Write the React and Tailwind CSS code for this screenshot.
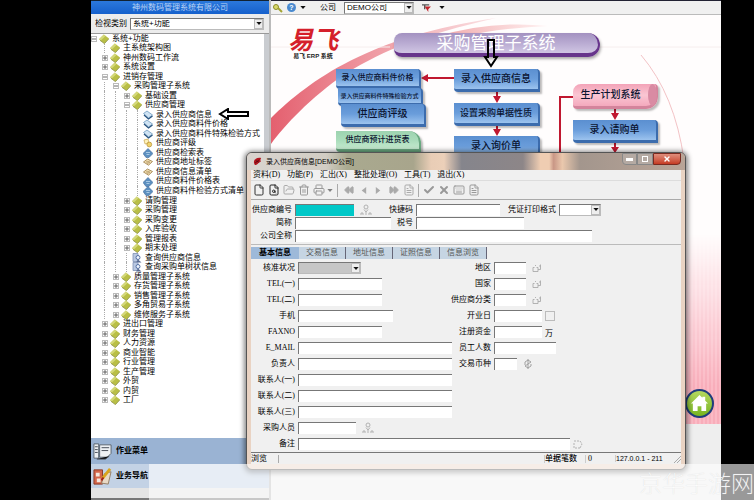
import React from "react";
import {
  File, FileSearch, FolderOpen, Trash2, Printer, Rewind, FastForward,
  FileText, Check, X, Keyboard,
} from "lucide-react";

const tree = [
  [0, "系统+功能", "book", "-"],
  [1, "主系统架构图", "book", ""],
  [1, "神州数码工作流", "book", "+"],
  [1, "系统设置", "book", "+"],
  [1, "进销存管理", "book", "-"],
  [2, "采购管理子系统", "book", "-"],
  [3, "基础设置", "book", "+"],
  [3, "供应商管理", "book", "-"],
  [4, "录入供应商信息", "form", ""],
  [4, "录入供应商料件价格", "form", ""],
  [4, "录入供应商料件特殊检验方式", "form", ""],
  [4, "供应商评级", "batch", ""],
  [4, "供应商检索表", "query", ""],
  [4, "供应商地址标签", "report", ""],
  [4, "供应商信息清单", "report", ""],
  [4, "供应商料件价格表", "query", ""],
  [4, "供应商料件检验方式清单", "query", ""],
  [3, "请购管理", "book", "+"],
  [3, "采购管理", "book", "+"],
  [3, "采购变更", "book", "+"],
  [3, "入库验收", "book", "+"],
  [3, "管理报表", "book", "+"],
  [3, "期末处理", "book", "+"],
  [3, "查询供应商信息", "find", ""],
  [3, "查询采购单树状信息", "find", ""],
  [2, "质量管理子系统", "book", "+"],
  [2, "存货管理子系统", "book", "+"],
  [2, "销售管理子系统", "book", "+"],
  [2, "多角贸易子系统", "book", "+"],
  [2, "维修服务子系统", "book", "+"],
  [1, "进出口管理", "book", "+"],
  [1, "财务管理", "book", "+"],
  [1, "人力资源", "book", "+"],
  [1, "商业智能", "book", "+"],
  [1, "行业管理", "book", "+"],
  [1, "生产管理", "book", "+"],
  [1, "外贸", "book", "+"],
  [1, "内贸", "book", "+"],
  [1, "工厂", "book", "+"],
];

function TreeIcon({ kind }) {
  if (kind === "form")
    return (
      <svg viewBox="0 0 10 10" className="size-[10px]">
        <path d="M0.5 3.500 4 1 9.500 5 5.500 8Z" fill="#cfe3f3" stroke="#6f9cc0" strokeWidth="0.8" />
        <path d="M1 5 5.500 9 9.500 6" fill="none" stroke="#2a5580" strokeWidth="1.3" />
      </svg>
    );
  if (kind === "batch")
    return (
      <svg viewBox="0 0 10 10" className="size-[10px]">
        <path d="M1 2 5 1 6 5 2 6Z" fill="#fff3ba" stroke="#c9a550" strokeWidth="0.7" />
        <circle cx="6.3" cy="6.5" r="2.4" fill="#f0d36c" stroke="#b48a2e" strokeWidth="0.7" />
      </svg>
    );
  if (kind === "query")
    return (
      <svg viewBox="0 0 10 10" className="size-[10px]">
        <path d="M0 5.500 5 0.500 10 5.500 6 9.500 3 9.500Z" fill="#5c8fbf" stroke="#3f6a9a" strokeWidth="0.6" />
        <path d="M3 4.500h4M3.500 6.500h3" stroke="#b9d5ee" strokeWidth="0.8" />
      </svg>
    );
  if (kind === "report")
    return (
      <svg viewBox="0 0 10 10" className="size-[10px]">
        <path d="M0.5 5 4.5 2 9.5 4.5 5.5 8.2Z" fill="#efdcb0" stroke="#9a7b45" strokeWidth="0.8" />
        <path d="M3 5 6.5 4.5M4 6.3 7 5.5" stroke="#9a7b45" strokeWidth="0.6" />
      </svg>
    );
  if (kind === "find")
    return (
      <svg viewBox="0 0 10 10" className="size-[10px]">
        <path d="M1 0.500h5v8H1z" fill="#b9c8e2" stroke="#7f90b5" strokeWidth="0.8" />
        <circle cx="6" cy="4.5" r="2" fill="#eef4ff" stroke="#4a669c" strokeWidth="0.9" />
        <path d="M4 9.500 6 6.500 9.500 9.500Z" fill="#5a6c92" />
      </svg>
    );
  return (
    <svg viewBox="0 0 10 10" className="size-[10px]">
      <path d="M0 5.2 4.8 0.6 10 4.4 5.4 9.4Z" fill="#b9bf45" />
      <path d="M0 5.2 4.8 0.6 6.5 1.9 1.8 6.5Z" fill="#d4d87a" />
      <path d="M1 6.3 5.4 9.6 10 4.6" fill="none" stroke="#868c38" strokeWidth="0.8" />
    </svg>
  );
}

function TreeRow({ row }) {
  const [depth, label, kind, state] = row;
  return (
    <li className="flex min-h-0 flex-1 items-center">
      {Array.from({ length: depth + 1 }, (_, i) => (
        <span key={i} className="flex h-full w-[11px] shrink-0 items-center justify-center">
          {i === depth && state ? (
            <button className="flex size-[6px] items-center justify-center border border-[#bbb] bg-white" aria-label={"展开 " + label}>
              <svg viewBox="0 0 4 4" className="size-[4px]">
                <path d={state === "+" ? "M0 2h4M2 0v4" : "M0 2h4"} stroke="#444" strokeWidth="0.8" />
              </svg>
            </button>
          ) : (
            i > 0 && <span className="h-full border-l border-dotted border-[#aaa]" />
          )}
        </span>
      ))}
      <TreeIcon kind={kind} />
      <span className="ml-[3px] whitespace-nowrap text-[8px] leading-none">{label}</span>
    </li>
  );
}

function Caret() {
  return (
    <svg viewBox="0 0 7 4" className="h-[3px] w-[6px]">
      <path d="M0 0h7L3.5 4Z" fill="#111" />
    </svg>
  );
}

function Select({ id, label, value, width, tone = "bg-white" }) {
  return (
    <span className={"relative block h-[12px] " + width}>
      <select id={id} aria-label={label} defaultValue={value} className={"block h-full w-full appearance-none border border-[#bbb] border-t-[#777] border-l-[#777] pl-[2px] text-[8px] leading-none " + tone}>
        <option>{value}</option>
      </select>
      <span className="pointer-events-none absolute inset-y-px right-px flex w-[9px] items-center justify-center border border-[#bbb] bg-[#eee]">
        <Caret />
      </span>
    </span>
  );
}

function Field({ id, label, width, labelWidth, tone = "bg-white", children }) {
  return (
    <div className="flex h-4 items-center gap-[3px]">
      <label htmlFor={id} className={"shrink-0 whitespace-nowrap text-right " + labelWidth}>{label}</label>
      {width ? <input id={id} className={"h-[12px] shrink-0 border-t border-l border-[#777] px-[2px] outline-none " + width + " " + tone} /> : null}
      {children}
    </div>
  );
}

function Lookup() {
  return (
    <svg viewBox="0 0 10 10" className="ml-[3px] size-[10px]" fill="none" stroke="#aaa" strokeWidth="0.9">
      <path d="M1 4.500v4h5v-4M1 4.500h1.500M4.500 4.500H6M3 3l1-1M6 6.500h2.500v-5M7 3h1.500" />
    </svg>
  );
}

function People() {
  return (
    <svg viewBox="0 0 12 12" className="ml-[3px] size-[12px] shrink-0" fill="none" stroke="#aaa" strokeWidth="0.9">
      <circle cx="6" cy="3" r="2" />
      <path d="M4 5.500 6 8l2-2.500M6 8v3M1 11V9h2v2M9 11V9h2v2" />
    </svg>
  );
}

function Node({ place, text, children, tone = "from-[#5b8fd0] via-[#6a9ddb] to-[#9cc3ee] border-[#3c6cad]" }) {
  return (
    <button className={"absolute flex items-center justify-center whitespace-nowrap rounded-tr-sm rounded-bl-sm border-b-[3px] border-r-2 bg-linear-to-b font-medium leading-none text-[#0b1430] shadow-[2px_2px_2px_#0004] " + place + " " + text + " " + tone}>
      {children}
    </button>
  );
}

const menus = ["资料(D)", "功能(P)", "汇出(X)", "整批处理(O)", "工具(T)", "退出(X)"];
const tabs = ["基本信息", "交易信息", "地址信息", "证照信息", "信息浏览"];
const tools = [
  [File, "新增", "text-[#333]"], [FileSearch, "查询", "text-[#222]"], [FolderOpen, "打开", "text-[#aaa]"],
  [Trash2, "删除", "text-[#999]"], [Printer, "打印", "text-[#999]"],
];
const moves = [
  [Rewind, "首笔"], ["M8 1 3 5l5 4Z", "上笔"], ["M2 1 7 5 2 9Z", "下笔"], [FastForward, "末笔"], [FileText, "附件"],
];
const actions = [[Check, "确定"], [X, "取消"], [Keyboard, "输入"], [FileText, "说明"]];

function ToolButton({ icon, label, tone }) {
  const Icon = icon;
  const filled = icon === Rewind || icon === FastForward;
  const heavy = icon === Check || icon === X;
  return (
    <button aria-label={label} className={"flex w-[15px] items-center justify-center " + tone}>
      {typeof icon === "string" ? (
        <svg viewBox="0 0 10 10" className="size-[9px]"><path d={icon} fill="currentColor" /></svg>
      ) : (
        <Icon size={filled ? 10 : 12} strokeWidth={heavy ? 4 : 2} fill={filled ? "currentColor" : "none"} />
      )}
    </button>
  );
}

function SupplierWindow() {
  const column = "w-[44px]";
  return (
    <section className="absolute top-[152px] left-[246px] w-[440px] rounded-[6px] border border-[#555] bg-[#e9d3c3] px-[4px] pb-[5px] text-[8px] leading-none text-black shadow-[0_1px_5px_2px_#0007] [font-family:'Liberation_Serif','Noto_Sans_CJK_SC',serif]">
      <header className="-mx-[4px] flex h-[17px] items-center rounded-t-[5px] bg-[linear-gradient(90deg,#d9d4cf_0%,#d2cdc4_18%,#a9a98f_23%,#a8a58c_38%,#e9cdb6_42%,#ecd0b9_45%,#85858c_49%,#8d8688_63%,#efcdb2_67%,#efcdb2_69%,#c99786_70%,#eac8ad_72%,#a3968d_76%,#b9a497_100%)] pl-[6px] pr-[4px] [font-family:'Liberation_Sans','Noto_Sans_CJK_SC',sans-serif]">
        <svg viewBox="0 0 10 10" className="size-[9px]">
          <path d="M1 6C1 2 5 0 9 1 8 3 8 4 9 5 6 5 6 9 2 9Z" fill="#b3151f" />
          <path d="M2 7 7 3M3 4 7 6" stroke="#5c070d" strokeWidth="0.9" />
        </svg>
        <h1 className="ml-[4px] text-[7px]">录入供应商信息[DEMO公司]</h1>
        <div className="mb-[5px] ml-auto flex h-[12px] text-white">
          <button aria-label="最小化" className="flex w-[15px] items-center justify-center rounded-bl-sm border border-[#888] bg-[#b5aaa3]"><span className="h-[3px] w-[7px] bg-white" /></button>
          <button aria-label="最大化" className="flex w-[16px] items-center justify-center border border-[#888] bg-[#b5aaa3]"><span className="size-[6px] border border-white" /></button>
          <button aria-label="关闭" className="flex w-[28px] items-center justify-center rounded-br-sm border border-[#7a2a20] bg-linear-to-b from-[#df8d7c] to-[#c53a22]"><X size={8} strokeWidth={4} /></button>
        </div>
      </header>

      <div className="bg-[#f0f0f0]">
        <nav className="flex h-[11px] items-center gap-[7px] border-b border-[#ddd] px-[2px]">
          {menus.map((m) => <button key={m}>{m}</button>)}
        </nav>
        <div className="flex h-[19px] items-center border-b border-[#aaa]">
          {tools.map(([icon, label, tone]) => <ToolButton key={label} icon={icon} label={label} tone={tone} />)}
          <button aria-label="打印选项" className="mr-[4px] flex w-[7px] justify-center opacity-50"><Caret /></button>
          <span className="mr-[3px] h-[13px] border-l border-[#aaa]" />
          {moves.map(([icon, label]) => <ToolButton key={label} icon={icon} label={label} tone="text-[#aaa]" />)}
          <span className="mx-[2px] h-[13px] border-l border-[#aaa]" />
          {actions.map(([icon, label]) => <ToolButton key={label} icon={icon} label={label} tone="text-[#999]" />)}
        </div>

        <div className="border-b border-[#bbb] pt-[3px] pb-[2px]">
          <div className="flex h-[13px] items-center">
            <Field id="no" label="供应商编号" labelWidth="w-[41px]" width="w-[59px]" tone="bg-[#00c8c8]"><People /></Field>
            <Field id="code" label="快捷码" labelWidth="w-[41px]" width="w-[84px]" />
            <Field id="fmt" label="凭证打印格式" labelWidth="w-[56px]"><Select id="fmt" value="" width="w-[42px]" /></Field>
          </div>
          <div className="flex h-[13px] items-center">
            <Field id="abbr" label="简称" labelWidth="w-[41px]" width="w-[96px]" />
            <Field id="tax" label="税号" labelWidth="w-[22px]" width="w-[108px]" />
          </div>
          <div className="flex h-[13px] items-center">
            <Field id="full" label="公司全称" labelWidth="w-[41px]" width="w-[297px]" />
          </div>
        </div>

        <div className="mt-[2px] flex h-[12px]" role="tablist">
          {tabs.map((t, i) => (
            <button key={t} role="tab" aria-selected={i === 0} className={i === 0 ? "w-[48px] bg-[#9db9d9] font-bold" : "w-[47px] border-r border-[#667] bg-[#c6d5e3] text-[#555]"}>{t}</button>
          ))}
        </div>

        <div className="grid grid-cols-[196px_1fr] pt-px">
          <div>
            <Field id="state" label="核准状况" labelWidth={column}><Select id="state" value="" width="w-[63px]" tone="bg-[#c6c6c6]" /></Field>
            <Field id="tel1" label="TEL(一)" labelWidth={column} width="w-[84px]" />
            <Field id="tel2" label="TEL(二)" labelWidth={column} width="w-[84px]" />
            <Field id="mobile" label="手机" labelWidth={column} width="w-[95px]" />
            <Field id="fax" label="FAXNO" labelWidth={column} width="w-[84px]" />
            <Field id="mail" label="E_MAIL" labelWidth={column} width="w-[154px]" />
            <Field id="owner" label="负责人" labelWidth={column} width="w-[154px]" />
            <Field id="c1" label="联系人(一)" labelWidth={column} width="w-[154px]" />
            <Field id="c2" label="联系人(二)" labelWidth={column} width="w-[154px]" />
            <Field id="c3" label="联系人(三)" labelWidth={column} width="w-[154px]" />
            <Field id="buyer" label="采购人员" labelWidth={column} width="w-[58px]"><People /></Field>
          </div>
          <div>
            <Field id="area" label="地区" labelWidth={column} width="w-[32px]"><Lookup /></Field>
            <Field id="nation" label="国家" labelWidth={column} width="w-[32px]"><Lookup /></Field>
            <Field id="kind" label="供应商分类" labelWidth={column} width="w-[32px]"><Lookup /></Field>
            <Field id="open" label="开业日" labelWidth={column} width="w-[48px]"><button aria-label="选择日期" className="size-[10px] border border-[#bbb]" /></Field>
            <Field id="capital" label="注册资金" labelWidth={column} width="w-[48px]"><span className="pt-[3px]">万</span></Field>
            <Field id="staff" label="员工人数" labelWidth={column} width="w-[62px]" />
            <Field id="money" label="交易币种" labelWidth={column} width="w-[23px]">
              <svg viewBox="0 0 10 10" className="ml-[3px] size-[10px]" fill="none" stroke="#999" strokeWidth="0.9"><path d="M5 0v10M2 3l3-2 3 2-3 2-3 2 3 2 3-2V5M2 3v3" /></svg>
            </Field>
          </div>
          <div className="col-span-2">
            <Field id="memo" label="备注" labelWidth={column} width="w-[272px]">
              <svg viewBox="0 0 10 10" className="size-[10px]" fill="none" stroke="#aaa" strokeWidth="0.9"><path d="M1 2h5M1 4v5h6M7 2l2 3-2 4" strokeDasharray="2 1" /></svg>
            </Field>
          </div>
        </div>

        <footer className="flex h-[12px] items-center border-t border-[#777]">
          <span className="w-[28px] border-r border-[#aaa]">浏览</span>
          <span className="ml-auto border-l border-[#ccc] pr-[8px] font-medium">单据笔数</span>
          <span className="w-[30px] border-l border-[#ccc] pl-[2px]">0</span>
          <span className="w-[58px] border-l border-[#ccc] text-[7px] [font-family:'Liberation_Sans',sans-serif]">127.0.0.1 - 211</span>
          <svg viewBox="0 0 8 8" className="size-[8px]" stroke="#aaa"><path d="M1 8 8 1M4 8l4-4" /></svg>
        </footer>
      </div>
    </section>
  );
}

function Sidebar() {
  return (
    <aside className="flex w-[178px] shrink-0 flex-col bg-[#ececec] text-black">
      <h2 className="flex h-[14px] items-center justify-center border-t border-[#123] bg-linear-to-b from-[#2b78dc] to-[#1560cc] text-[8px] leading-none text-[#b9d3f5]">神州数码管理系统有限公司</h2>
      <div className="flex h-[20px] items-center gap-[3px] border-b border-[#999] pl-[4px] text-[8px] leading-none">
        <label htmlFor="view">检视类别</label>
        <Select id="view" value="系统+功能" width="w-[134px]" />
      </div>
      <div className="flex-1 overflow-hidden border-r-[5px] border-[#c9ccd0] bg-white">
        <ul className="-ml-[3px] flex h-[371px] flex-col">
          {tree.map((row, i) => <TreeRow key={i} row={row} />)}
        </ul>
      </div>
      <button className="flex h-[26px] items-center gap-[4px] bg-[#9ab3d3] pl-[2px] text-[8px] font-bold leading-none">
        <svg viewBox="0 0 20 20" className="size-[19px]">
          <path d="M1 2h5v15H1zM7 3h12v9l-4 4H7z" fill="#eef1f4" stroke="#59636e" />
          <path d="M2 5h3M2 8h3M2 11h3M9 6h8M9 9h7M4 18h9l4-3" stroke="#434b55" />
        </svg>
        作业菜单
      </button>
      <button className="flex h-[24px] items-center gap-[4px] bg-[#c3d2e5] pl-[2px] text-[8px] font-bold leading-none">
        <svg viewBox="0 0 20 20" className="size-[19px]">
          <path d="M1 3h9v15H1z" fill="#d4664a" stroke="#8a3a26" />
          <path d="M3 6h4v4H3zM4 12h4v4H4z" fill="#f4e6dc" />
          <path d="M9 17 12 7l7-2-3 13Z" fill="#e9d9c5" stroke="#957d62" />
          <path d="M10 12 18 2" stroke="#d9a51d" strokeWidth="3" />
          <path d="m9 14 2-3" stroke="#a02019" strokeWidth="2" />
        </svg>
        业务导航
      </button>
      <div className="h-[12px] border-b-2 border-[#777] bg-[#e4e4e4]" />
    </aside>
  );
}

function Diagram() {
  return (
    <div className="relative h-[409px] overflow-hidden bg-[#fffdfd]">
      <div className="absolute right-0 bottom-0 h-[190px] w-[60px] bg-[repeating-linear-gradient(90deg,#f8adba_0_2px,#fbbac5_2px_4px)] [mask-image:linear-gradient(to_bottom,transparent,black_80%)]" />
      <svg className="absolute top-0 left-0 h-[409px] w-[450px]" viewBox="271 15 450 409">
        <defs>
          <linearGradient id="sweep" x1="0" x2="1">
            <stop offset="0" stopColor="#e4606f" />
            <stop offset="0.5" stopColor="#f0a0a8" />
            <stop offset="1" stopColor="#fbe3e5" />
          </linearGradient>
          <linearGradient id="fade" x1="0" x2="1">
            <stop offset="0" stopColor="#f0a5a8" />
            <stop offset="1" stopColor="#fff2f2" />
          </linearGradient>
        </defs>
        <path d="M271 118C310 80 370 36 496 18 420 36 388 48 345 74 310 98 285 125 271 144Z" fill="url(#sweep)" />
        <path d="M435 37Q490 20 548 26 500 28 460 37Z" fill="url(#fade)" />
        <path d="M641 55Q675 95 684 160" fill="none" stroke="#f3c3c6" />
        <path d="M271 47H390M600 47H721" stroke="#f6eeee" />
        <g stroke="#c01830" strokeWidth="2" fill="none">
          <path d="M454 78H427M497 91v6M497 125v6M615 108v6M615 143v5M573 97H560V160" />
        </g>
        <path d="M421 78l7-4v8ZM493 96h8l-4 7ZM493 129h8l-4 7ZM611 113h8l-4 7ZM611 147h8l-4 6Z" fill="#c01830" />
      </svg>

      <div className="absolute top-[13px] left-[16px] w-[52px] text-center text-[#d51f2b]">
        <div className="text-[25px] font-bold italic leading-[24px]">易飞</div>
        <div className="mt-[1px] whitespace-nowrap text-[6px] font-bold leading-none text-[#222]">易飞 ERP 系统</div>
      </div>

      <h2 className="absolute top-[18px] left-[123px] flex h-[24px] w-[206px] items-center justify-center rounded-l-lg rounded-r-xl border-r-2 border-b-[4px] border-[#67358b] bg-linear-to-b from-[#a391c0] via-[#b9abd2] to-[#d0c5e3] text-[17px] leading-none text-white shadow-[1px_2px_3px_#0005]">采购管理子系统</h2>

      <Node place="top-[54px] left-[65px] h-[20px] w-[85px]" text="text-[8px]">录入供应商料件价格</Node>
      <Node place="top-[73px] left-[67px] h-[18px] w-[85px]" text="text-[6px]">录入供应商料件特殊检验方式</Node>
      <Node place="top-[89px] left-[70px] h-[23px] w-[85px]" text="text-[10px]">供应商评级</Node>
      <Node place="top-[116px] left-[65px] h-[21px] w-[85px] rounded-tr-xl" text="text-[8px]" tone="from-[#9dd3b0] via-[#a9dcba] to-[#c5ead0] border-[#6aa981]">供应商预计进货表</Node>
      <Node place="top-[54px] left-[183px] h-[23px] w-[86px]" text="text-[10px]">录入供应商信息</Node>
      <Node place="top-[88px] left-[183px] h-[23px] w-[86px]" text="text-[9px]">设置采购单据性质</Node>
      <Node place="top-[121px] left-[183px] h-[23px] w-[86px]" text="text-[10px]">录入询价单</Node>
      <Node place="top-[69px] left-[302px] h-[25px] w-[85px] rounded-l-lg rounded-r-xl pr-[8px]" text="text-[10px]" tone="from-[#f3a3b8] via-[#fac6d3] to-[#f4a9bd] border-[#d4849c]">
        生产计划系统
        <span className="absolute -right-px top-0 h-[22px] w-[9px] rounded-[50%] bg-[#d98ba3]" />
      </Node>
      <Node place="top-[105px] left-[302px] h-[23px] w-[85px]" text="text-[10px]">录入请购单</Node>

      <svg viewBox="0 0 16 30" className="absolute top-[23px] left-[212px] h-[30px] w-[16px]">
        <path d="M5 2h6v17h3L8 28 2 19h3Z" fill="none" stroke="#000" strokeWidth="2" />
      </svg>
      <button aria-label="主页" className="absolute right-[7px] bottom-[6px] flex size-[29px] items-center justify-center rounded-full border-2 border-[#1f3d7c] bg-linear-to-b from-[#b5d85e] to-[#78b51c]">
        <svg viewBox="0 0 20 20" className="size-[19px]" fill="#fff"><path d="M10 1 1 10h2v8h5v-5h4v5h5v-8h2l-3-3V3h-3v1Z" /></svg>
      </button>
    </div>
  );
}

export default function App() {
  return (
    <div className="relative flex min-h-screen overflow-hidden bg-black pr-[33px] pl-[91px] [font-family:'Liberation_Sans','Noto_Sans_CJK_SC',sans-serif]">
      <Sidebar />
      <main className="flex min-w-0 flex-1 flex-col border-l-2 border-[#bbb] bg-[#eee]">
        <div className="flex h-[15px] items-center border-t border-b border-t-[#223] border-b-[#bbb] bg-[#f0f0f0] pl-[2px] text-[8px] leading-none">
          <button aria-label="钥匙" className="mr-[4px]">
            <svg viewBox="0 0 10 10" className="size-[10px]"><circle cx="3" cy="4" r="2.500" fill="#d9d96a" stroke="#8b8b28" /><path d="m5 5 4 4" stroke="#a4a433" strokeWidth="2" /></svg>
          </button>
          <button aria-label="帮助" className="mr-[4px] flex size-[9px] items-center justify-center rounded-full bg-[#4a8ad0] text-[7px] font-bold text-white">?</button>
          <Caret />
          <label htmlFor="company" className="mr-[8px] ml-[14px]">公司</label>
          <Select id="company" value="DEMO公司" width="w-[70px]" />
          <button aria-label="筛选" className="mx-[8px]">
            <svg viewBox="0 0 10 10" className="size-[9px]"><path d="M0 2h8M3 2v5" stroke="#555" strokeWidth="1.5" /><path d="M3 4h7L7 7v3Z" fill="#c2262e" /></svg>
          </button>
          <Caret />
        </div>
        <Diagram />
      </main>

      <svg viewBox="0 0 32 12" className="absolute top-[108px] left-[218px] h-[12px] w-[32px]">
        <path d="M2 6 10 1v3h20v4H10v3Z" fill="#fff" stroke="#000" strokeWidth="2" />
      </svg>

      <SupplierWindow />

      <div className="pointer-events-none absolute right-0 bottom-0 left-[149px] flex h-[36px] items-center justify-end overflow-hidden bg-white/60 pt-[4px]">
        <span className="whitespace-nowrap text-[23px] font-thin leading-none text-white [text-shadow:0_0_1px_#ccc]">京华手游网</span>
      </div>
    </div>
  );
}
